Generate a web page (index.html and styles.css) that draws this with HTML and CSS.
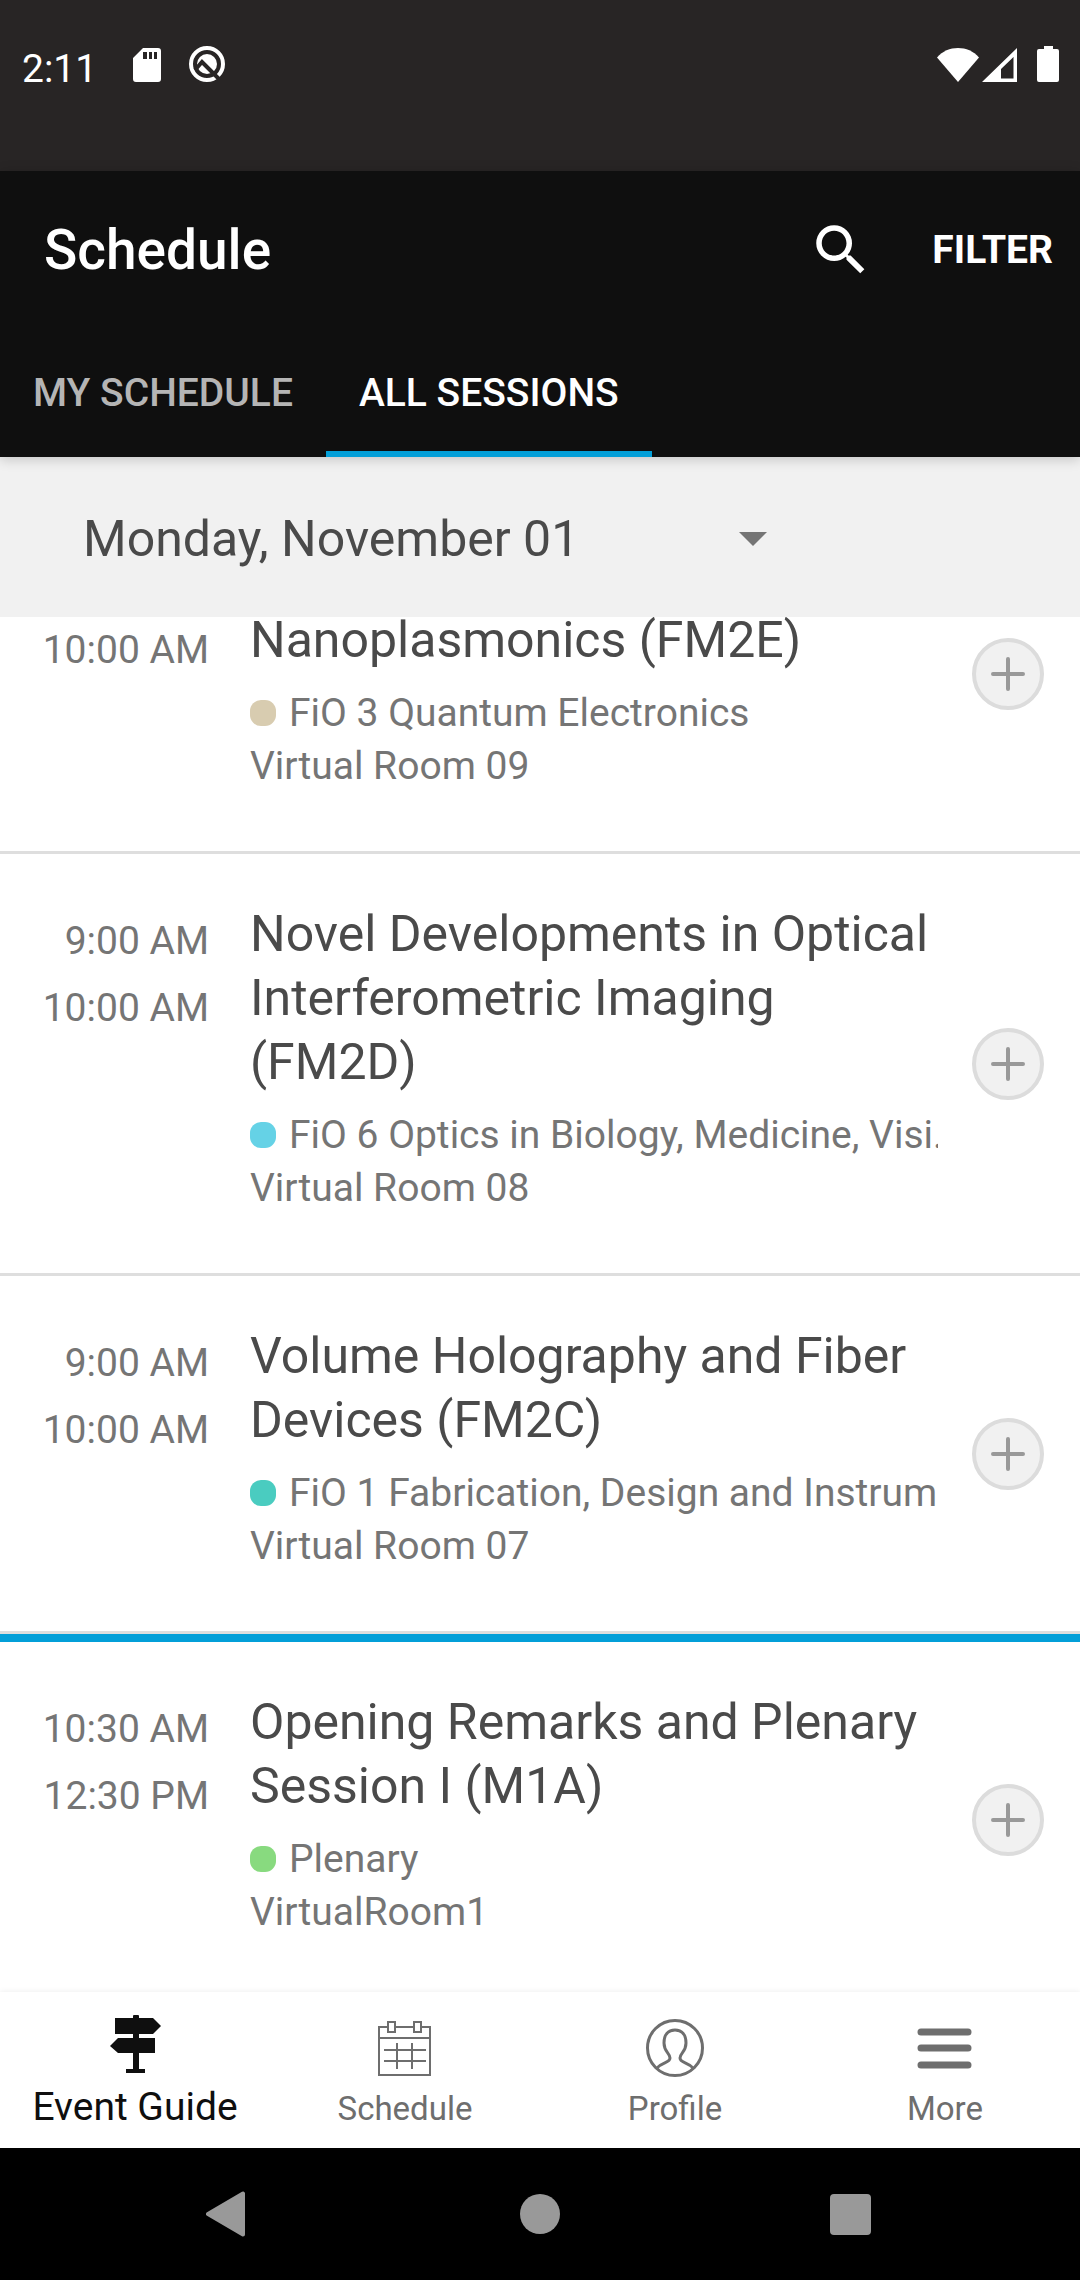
FILE: index.html
```html
<!DOCTYPE html>
<html lang="en">
<head>
  <meta charset="UTF-8">
  <meta name="viewport" content="width=device-width, initial-scale=1.0">
  <title>Schedule</title>
  <link rel="stylesheet" href="styles.css">
</head>
<body>
  <div class="app">
    <div class="status-bar">
      <span class="clock">2:11</span>
      <svg class="icon-sd" width="28" height="34" viewBox="0 0 28 34">
        <path fill="#fff" fill-rule="evenodd" d="M10 0h15a3 3 0 0 1 3 3v28a3 3 0 0 1-3 3H3a3 3 0 0 1-3-3V10zM10 4v7h4V4zM16 4v7h3V4zM21 4v7h3V4z"/>
      </svg>
      <svg class="icon-q" width="40" height="36" viewBox="0 0 40 36">
        <circle cx="20" cy="18" r="16" fill="none" stroke="#fff" stroke-width="4"/>
        <circle cx="20" cy="18" r="10" fill="#fff"/>
        <path d="M8 24l7-8L33 34" fill="none" stroke="#282525" stroke-width="4"/>
      </svg>
      <span class="status-right">
        <svg width="42" height="34" viewBox="0 0 42 34">
          <path fill="#fff" d="M21 34L0 9.500C5.500 3 13 0 21 0s15.500 3 21 9.500z"/>
        </svg>
        <svg width="35" height="34" viewBox="0 0 35 34">
          <path fill="#fff" fill-rule="evenodd" d="M35 0v34H0zM31.500 9L19 21v9.500h12.500z"/>
        </svg>
        <svg class="icon-battery" width="22" height="36" viewBox="0 0 22 36">
          <path fill="#fff" d="M7 0h9v3h4a2 2 0 0 1 2 2v29a2 2 0 0 1-2 2H2a2 2 0 0 1-2-2V5a2 2 0 0 1 2-2h5z"/>
        </svg>
      </span>
    </div>

    <header class="app-bar">
      <div class="title-row">
        <h1>Schedule</h1>
        <button class="search-btn" aria-label="Search">
          <svg width="66" height="66" viewBox="0 0 24 24">
            <path fill="#fff" d="M15.500 14h-.79l-.28-.27A6.470 6.470 0 0 0 16 9.500 6.500 6.500 0 1 0 9.500 16c1.610 0 3.090-.59 4.230-1.570l.27.28v.79l5 4.990L20.490 19l-4.990-5zm-6 0C7.010 14 5 11.990 5 9.500S7.010 5 9.500 5 14 7.010 14 9.500 11.990 14 9.500 14z"/>
          </svg>
        </button>
        <button class="filter-btn">FILTER</button>
      </div>
      <nav class="tabs">
        <button class="tab">MY SCHEDULE</button>
        <button class="tab active">ALL SESSIONS</button>
      </nav>
    </header>

    <div class="date-bar">
      <div class="date-picker">
        <select aria-label="Day">
          <option>Monday, November 01</option>
        </select>
        <svg width="28" height="14" viewBox="0 0 28 14"><path fill="#757575" d="M0 0h28L14 14z"/></svg>
      </div>
    </div>

    <main class="session-list">
      <article class="session scrolled">
        <div class="times"><time>10:00 AM</time></div>
        <div class="info">
          <h2>Nanoplasmonics (FM2E)</h2>
          <p class="track"><span class="dot sand"></span>FiO 3 Quantum Electronics</p>
          <p>Virtual Room 09</p>
        </div>
        <button class="add-btn" aria-label="Add to my schedule">
          <svg width="34" height="34" viewBox="0 0 34 34"><path d="M17 2v30M2 17h30"/></svg>
        </button>
      </article>

      <article class="session">
        <div class="times"><time>9:00 AM</time><time>10:00 AM</time></div>
        <div class="info">
          <h2>Novel Developments in Optical Interferometric Imaging (FM2D)</h2>
          <p class="track"><span class="dot cyan"></span>FiO 6 Optics in Biology, Medicine, Visi...</p>
          <p>Virtual Room 08</p>
        </div>
        <button class="add-btn" aria-label="Add to my schedule">
          <svg width="34" height="34" viewBox="0 0 34 34"><path d="M17 2v30M2 17h30"/></svg>
        </button>
      </article>

      <article class="session">
        <div class="times"><time>9:00 AM</time><time>10:00 AM</time></div>
        <div class="info">
          <h2>Volume Holography and Fiber Devices (FM2C)</h2>
          <p class="track"><span class="dot teal"></span>FiO 1 Fabrication, Design and Instrum...</p>
          <p>Virtual Room 07</p>
        </div>
        <button class="add-btn" aria-label="Add to my schedule">
          <svg width="34" height="34" viewBox="0 0 34 34"><path d="M17 2v30M2 17h30"/></svg>
        </button>
      </article>

      <article class="session new-slot">
        <div class="times"><time>10:30 AM</time><time>12:30 PM</time></div>
        <div class="info">
          <h2>Opening Remarks and Plenary Session I (M1A)</h2>
          <p class="track"><span class="dot green"></span>Plenary</p>
          <p>VirtualRoom1</p>
        </div>
        <button class="add-btn" aria-label="Add to my schedule">
          <svg width="34" height="34" viewBox="0 0 34 34"><path d="M17 2v30M2 17h30"/></svg>
        </button>
      </article>
    </main>

    <nav class="bottom-nav">
      <a href="#guide" class="active">
        <svg width="60" height="60" viewBox="0 0 60 60">
          <path fill="#0f0f0f" d="M28 5V3q0-1 1-1h4q1 0 1 1v2h14l8 8-8 8H34v4h16v15H34v16h6v4H21v-4h7V40H13l-8-7 8-8h15v-4H10V5z"/>
        </svg>
        Event Guide
      </a>
      <a href="#schedule">
        <svg width="60" height="60" viewBox="0 0 60 60" fill="none" stroke="#6e6e6e" stroke-width="2">
          <path d="M13 9H4v48h51V9h-8M21 9h18M13 4h7v10h-7zM39 4h7v10h-7zM4 20h51M9 32h42M9 43h42M22 25v26M37 25v26"/>
        </svg>
        Schedule
      </a>
      <a href="#profile">
        <svg width="60" height="60" viewBox="0 0 60 60" fill="none" stroke="#6e6e6e" stroke-width="3">
          <circle cx="30" cy="30" r="27.500"/>
          <path d="M12 50c5-6 13-5 13-10 0-5-6-6-6-15 0-8 4-13 11-13s11 5 11 13c0 9-6 10-6 15 0 5 8 4 13 10"/>
        </svg>
        Profile
      </a>
      <a href="#more">
        <svg width="60" height="60" viewBox="0 0 60 60" stroke="#6e6e6e" stroke-width="7" stroke-linecap="round">
          <path d="M6 14h47M6 30h47M6 47h47"/>
        </svg>
        More
      </a>
    </nav>

    <div class="system-nav">
      <button aria-label="Back">
        <svg width="46" height="46" viewBox="0 0 46 46"><path fill="#999" stroke="#999" stroke-width="4" stroke-linejoin="round" d="M37 2.500v41L2 23z"/></svg>
      </button>
      <button aria-label="Home">
        <svg width="40" height="40" viewBox="0 0 40 40"><circle cx="20" cy="20" r="20" fill="#999"/></svg>
      </button>
      <button aria-label="Recent apps">
        <svg width="41" height="41" viewBox="0 0 41 41"><rect width="41" height="41" rx="4" fill="#999"/></svg>
      </button>
    </div>
  </div>
</body>
</html>
```

FILE: styles.css
```css
* {
  box-sizing: border-box;
}

body {
  margin: 0;
  background: #fff;
  font-family: Roboto, sans-serif;
  font-size: 39px;
  color: #757575;
}

h1, h2, p {
  margin: 0;
}

button {
  padding: 0;
  border: none;
  background: none;
  font: inherit;
  cursor: pointer;
}

svg {
  display: block;
  flex: none;
}

.app {
  display: flex;
  flex-direction: column;
  height: 100vh;
}

/* Status bar */
.status-bar {
  display: flex;
  align-items: baseline;
  height: 171px;
  padding: 46px 21px 0 22px;
  background: #282525;
  color: #fff;
}

.icon-sd {
  margin-left: 36px;
}

.icon-q {
  margin-left: 26px;
}

.status-right {
  display: flex;
  align-items: flex-end;
  gap: 3px;
  margin-left: auto;
}

.icon-battery {
  margin-left: 17px;
}

/* App bar */
.app-bar {
  position: relative;
  z-index: 1;
  background: #0f0f0f;
  color: #fff;
  box-shadow: 0 2px 12px rgba(0, 0, 0, 0.2);
}

.title-row {
  display: flex;
  align-items: center;
  height: 158px;
  padding: 0 27px 0 44px;
}

.title-row h1 {
  flex: 1;
  font-size: 55px;
  font-weight: 500;
}

.filter-btn {
  margin-left: 58px;
  color: #fff;
  font-weight: 700;
}

.tabs {
  display: flex;
  height: 128px;
}

.tab {
  padding: 0 33px;
  color: #b5b5b5;
  font-weight: 500;
}

.tab.active {
  color: #fff;
  box-shadow: inset 0 -6px #039fd8;
}

/* Date picker */
.date-bar {
  height: 160px;
  background: #f1f1f1;
}

.date-picker {
  display: grid;
  align-items: center;
  width: 71%;
  height: 100%;
  padding-top: 3px;
}

.date-picker select,
.date-picker svg {
  grid-area: 1 / 1;
}

.date-picker select {
  height: 100%;
  padding: 0 0 0 83px;
  border: none;
  background: none;
  appearance: none;
  color: #4a4a4a;
  font: inherit;
  font-size: 50px;
}

.date-picker svg {
  justify-self: end;
  pointer-events: none;
}

/* Sessions */
.session-list {
  flex: 1;
  min-height: 0;
  overflow: hidden;
}

.session {
  display: flex;
  align-items: flex-start;
  padding-right: 36px;
  border-bottom: 3px solid #dedede;
}

.session.new-slot {
  border-top: 8px solid #039fd8;
}

.times {
  width: 209px;
  padding-top: 54px;
  text-align: right;
  line-height: 67px;
}

.times time {
  display: block;
}

.info {
  flex: 1;
  min-width: 0;
  margin: 0 34px 0 41px;
  padding: 48px 0 58px;
  line-height: 53px;
}

.info h2 {
  margin-bottom: 15px;
  color: #4a4a4a;
  font-size: 50px;
  font-weight: 400;
  line-height: 64px;
}

.track {
  overflow: hidden;
  white-space: nowrap;
}

.dot {
  display: inline-block;
  width: 26px;
  height: 26px;
  margin-right: 13px;
  border-radius: 11px;
}

.sand { background: #d8ccb0; }
.cyan { background: #65d2e6; }
.teal { background: #4accc0; }
.green { background: #88da7f; }

/* first row is partly scrolled under the date bar */
.session.scrolled {
  margin-top: -121px;
}

.scrolled .times {
  padding-top: 121px;
}

.scrolled .info {
  padding-top: 112px;
}

.add-btn {
  display: flex;
  align-items: center;
  justify-content: center;
  align-self: center;
  width: 72px;
  height: 72px;
  border: 4px solid #dcdcdc;
  border-radius: 50%;
  background: #f1f1f1;
}

.add-btn path {
  stroke: #999;
  stroke-width: 4;
  stroke-linecap: round;
}

/* Bottom navigation */
.bottom-nav {
  display: grid;
  grid-template-columns: repeat(4, 1fr);
  height: 156px;
  background: #fff;
  box-shadow: 0 0 6px rgba(0, 0, 0, 0.08);
  z-index: 1;
}

.bottom-nav a {
  display: flex;
  flex-direction: column;
  align-items: center;
  justify-content: flex-end;
  padding-bottom: 20px;
  color: #6e6e6e;
  font-size: 33px;
  text-decoration: none;
}

.bottom-nav a.active {
  padding-bottom: 18px;
  color: #0f0f0f;
  font-size: 39px;
}

.bottom-nav svg {
  margin-bottom: 11px;
}

.system-nav {
  display: grid;
  grid-template-columns: repeat(3, 1fr);
  height: 132px;
  padding: 0 74px;
  background: #000;
}

.system-nav button {
  display: flex;
  align-items: center;
  justify-content: center;
}
```
